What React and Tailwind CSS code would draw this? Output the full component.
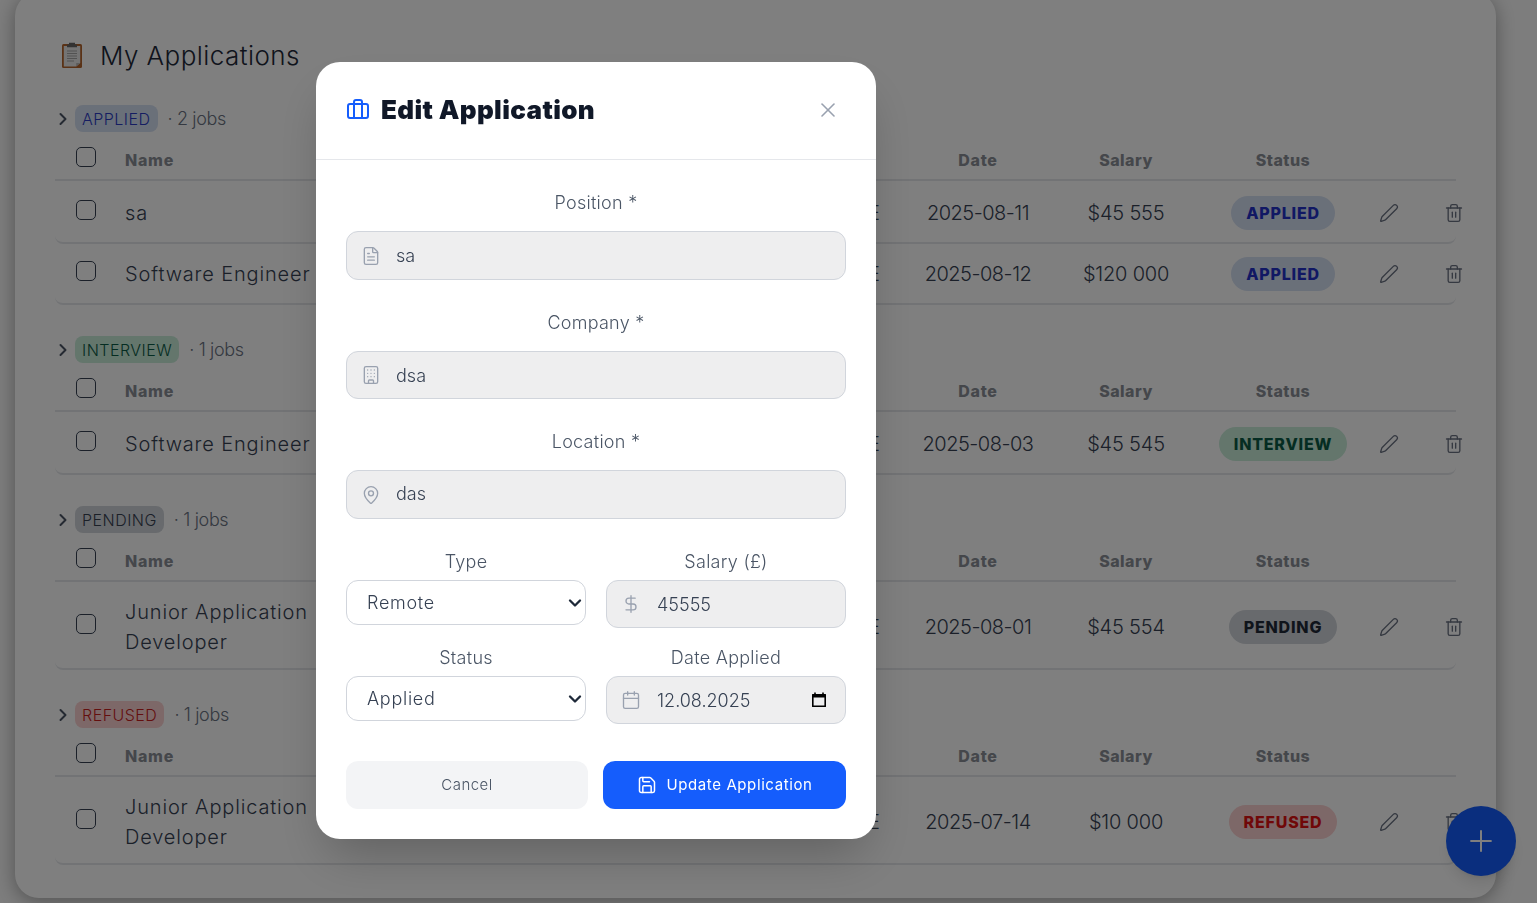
import { Briefcase, Building, Calendar, ChevronDown, ChevronRight, DollarSign, FileText, MapPin, Pen, Plus, Save, Trash2, X } from "lucide-react";

const GROUPS = [
    {
        label: "APPLIED",
        count: 2,
        chip: "bg-[#d5e0f2] text-[#2a3bc4]",
        pill: "bg-[#d5e0f2] text-[#2231c8]",
        rows: [
            { name: "sa", date: "2025-08-11", salary: "$45 555", height: "h-[63px] pt-[3px]" },
            { name: "Software Engineer", date: "2025-08-12", salary: "$120 000", height: "h-[61px] pt-[1px]" },
        ],
    },
    {
        label: "INTERVIEW",
        count: 1,
        chip: "bg-[#c8ecd9] text-[#0b5b45]",
        pill: "bg-[#c8ecd9] text-[#0b5b45]",
        rows: [{ name: "Software Engineer", date: "2025-08-03", salary: "$45 545", height: "h-[63px] pt-[3px]" }],
    },
    {
        label: "PENDING",
        count: 1,
        chip: "bg-[#d1d5db] text-[#374151]",
        pill: "bg-[#d1d5db] text-[#1f2937]",
        rows: [{ name: "Junior Application Developer", date: "2025-08-01", salary: "$45 554", height: "h-[88px] pt-[3px]" }],
    },
    {
        label: "REFUSED",
        count: 1,
        chip: "bg-[#fbd0d0] text-[#c81e1e]",
        pill: "bg-[#fbd0d0] text-[#e01010]",
        rows: [{ name: "Junior Application Developer", date: "2025-07-14", salary: "$10 000", height: "h-[88px] pt-[3px]" }],
    },
];

const ROW_GRID = "grid grid-cols-[70px_195px_565px_20px_146px_150px_164px_48px_82px] items-center";

function Checkbox() {
    return <input type="checkbox" className="appearance-none block w-5 h-5 -mt-[6px] ml-[21px] rounded-[5px] border border-gray-700 bg-transparent" />;
}

function ClipboardEmoji() {
    return (
        <svg viewBox="0 0 22 26" className="w-[22px] h-[26px]" aria-hidden="true">
            <rect x="1" y="2" width="20" height="24" rx="1.5" fill="#b5652c" />
            <path d="M2.8 4h16.4v17l-4 3.4H2.8z" fill="#e8e8e8" />
            <path d="M15.2 24.4l4-3.4h-4z" fill="#b9b9b9" />
            <path d="M8 0.8h6v1.6h2v2.8H6V2.4h2z" fill="#666" />
            <path d="M6 9h10M6 11.5h10M6 14h10M6 16.5h10M6 19h7" stroke="#a5a5a5" strokeWidth="1" />
        </svg>
    );
}

function JobRow({ row, group }) {
    return (
        <div className={`${ROW_GRID} ${row.height} w-[1401px] border-b-2 border-gray-200 rounded-b-lg`}>
            <Checkbox />
            <span className="text-[20px] leading-[30px] tracking-[0.042em] font-light text-gray-700">{row.name}</span>
            <span />
            <span className="text-[20px] font-light text-gray-700 -ml-[100px] w-[96px] text-right tracking-[0.05em]">REMOTE</span>
            <span className="text-center text-[20px] font-light text-gray-700 tracking-[-0.025em] whitespace-nowrap">{row.date}</span>
            <span className="text-center text-[20px] font-light text-gray-700 tracking-[-0.01em]">{row.salary}</span>
            <span className="flex justify-center">
                <span className={`h-[34px] px-[15px] rounded-full flex items-center text-[16px] font-extrabold tracking-[0.05em] ${group.pill}`}>
                    {group.label}
                </span>
            </span>
            <span className="flex justify-center text-gray-500">
                <Pen size={20} strokeWidth={1.6} />
            </span>
            <span className="flex justify-center text-gray-500">
                <Trash2 size={20} strokeWidth={1.6} />
            </span>
        </div>
    );
}

function JobGroup({ group }) {
    return (
        <section className="mb-[31px]">
            <div className="flex items-center h-[27px]">
                <ChevronRight size={20} strokeWidth={2.4} className="-ml-[2px] text-gray-600" />
                <span className={`ml-[2px] h-[27px] px-[7px] rounded-lg flex items-center text-[16px] font-light tracking-[0.03em] ${group.chip}`}>
                    {group.label}
                </span>
                <span className="ml-[10px] text-[18px] font-light text-gray-500 tracking-[-0.02em]">· {group.count} jobs</span>
            </div>
            <div className={`${ROW_GRID} h-[49px] pt-[8px] w-[1401px] border-b-2 border-gray-200`}>
                <Checkbox />
                <span className="text-[16px] font-extrabold tracking-[0.045em] text-[#8b8f97]">Name</span>
                <span />
                <span />
                <span className="text-center text-[16px] font-extrabold tracking-[0.045em] text-[#8b8f97]">Date</span>
                <span className="text-center text-[16px] font-extrabold tracking-[0.03em] text-[#8b8f97]">Salary</span>
                <span className="text-center text-[16px] font-extrabold tracking-[0.03em] text-[#8b8f97]">Status</span>
            </div>
            {group.rows.map((row) => (
                <JobRow key={row.date} row={row} group={group} />
            ))}
        </section>
    );
}

function Label({ children }) {
    return <label className="block text-center text-[18px] font-light text-gray-600 tracking-[0.015em]">{children}</label>;
}

function IconInput({ icon: Icon, value, size = "h-[49px] pl-[49px] pb-[1px]", right }) {
    return (
        <div className="relative">
            <Icon size={20} strokeWidth={1.6} className="absolute left-[15px] top-1/2 -translate-y-1/2 text-gray-400" />
            <input
                readOnly
                value={value}
                className={`w-full ${size} pr-4 rounded-xl border border-gray-300 bg-[#eeeeef] text-[18px] font-light text-gray-700 outline-none`}
            />
            {right}
        </div>
    );
}

function NativeSelect({ value, options }) {
    return (
        <div className="relative">
            <select
                value={value}
                onChange={() => {}}
                className="appearance-none w-full h-[45px] pl-[20px] pr-6 rounded-xl border border-gray-300 bg-white text-[18px] font-light tracking-[0.04em] text-gray-700 outline-none"
            >
                {options.map((option) => (
                    <option key={option}>{option}</option>
                ))}
            </select>
            <ChevronDown size={20} strokeWidth={2.8} className="absolute right-px top-1/2 -translate-y-1/2 text-gray-800 pointer-events-none" />
        </div>
    );
}

function PickerIcon() {
    return (
        <svg viewBox="0 0 16 16" className="absolute right-[19px] top-1/2 -translate-y-1/2 w-[16px] h-[16px]" aria-hidden="true">
            <path d="M4 0.5v2M12 0.5v2" stroke="#000" strokeWidth="1.6" />
            <path d="M1.5 2h13a.5.5 0 0 1 .5.5v12a.5.5 0 0 1-.5.5h-13a.5.5 0 0 1-.5-.5v-12a.5.5 0 0 1 .5-.5zM2.6 5.6v7.8h10.8V5.6z" fill="#000" fillRule="evenodd" />
        </svg>
    );
}

function EditModal() {
    return (
        <div className="fixed left-[316px] top-[62px] w-[560px] h-[777px] bg-white rounded-3xl shadow-2xl">
            <div className="h-[98px] pb-[2px] px-[30px] flex items-center border-b border-gray-200">
                <Briefcase size={24} strokeWidth={2} className="text-blue-600" />
                <h2 className="ml-[11px] text-[26px] font-black text-gray-900 tracking-[0.014em]">Edit Application</h2>
                <X size={24} strokeWidth={1.6} className="ml-auto mr-[6px] text-gray-400" />
            </div>
            <form className="px-[30px] pt-[29px]">
                <Label>Position *</Label>
                <div className="mt-[15px]">
                    <IconInput icon={FileText} value="sa" />
                </div>
                <div className="mt-[29px]">
                    <Label>Company *</Label>
                </div>
                <div className="mt-[15px]">
                    <IconInput icon={Building} value="dsa" size="h-[48px] pl-[49px]" />
                </div>
                <div className="mt-[29px]">
                    <Label>Location *</Label>
                </div>
                <div className="mt-[15px]">
                    <IconInput icon={MapPin} value="das" size="h-[49px] pl-[49px] pb-[2px]" />
                </div>
                <div className="mt-[29px] grid grid-cols-2 gap-x-5">
                    <div>
                        <Label>Type</Label>
                        <div className="mt-[5px]">
                            <NativeSelect value="Remote" options={["Remote", "Hybrid", "On-site"]} />
                        </div>
                    </div>
                    <div>
                        <Label>Salary (£)</Label>
                        <div className="mt-[5px]">
                            <IconInput icon={DollarSign} value="45555" size="h-[48px] pl-[50px]" />
                        </div>
                    </div>
                </div>
                <div className="mt-[16px] grid grid-cols-2 gap-x-5">
                    <div>
                        <Label>Status</Label>
                        <div className="mt-[5px]">
                            <NativeSelect value="Applied" options={["Applied", "Interview", "Pending", "Refused"]} />
                        </div>
                    </div>
                    <div>
                        <Label>Date Applied</Label>
                        <div className="mt-[5px]">
                            <IconInput icon={Calendar} value="12.08.2025" size="h-[48px] pl-[50px]" right={<PickerIcon />} />
                        </div>
                    </div>
                </div>
                <div className="mt-[37px] flex gap-[15px]">
                    <button type="button" className="w-[242px] h-[48px] rounded-xl bg-gray-100 text-[15px] font-light text-gray-600 tracking-[0.03em]">
                        Cancel
                    </button>
                    <button type="button" className="w-[243px] h-[48px] rounded-xl bg-blue-600 text-white text-[15px] tracking-[0.04em] flex items-center justify-center gap-[10px]">
                        <Save size={20} strokeWidth={1.8} />
                        Update Application
                    </button>
                </div>
            </form>
        </div>
    );
}

export default function App() {
    return (
        <div className="relative h-screen overflow-hidden bg-[#fbfbfb] px-[15px] [font-family:Inter,sans-serif]">
            <div className="-mt-[8px] w-[1481px] h-[906px] bg-white rounded-3xl shadow-[0_4px_20px_rgba(0,0,0,0.35)] pl-[40px] pt-[50px]">
                <div className="flex items-center h-[26px] ml-[6px]">
                    <ClipboardEmoji />
                    <h1 className="ml-[17px] text-[26px] font-light text-gray-800 tracking-[0.017em]">My Applications</h1>
                </div>
                <div className="mt-[37px]">
                    {GROUPS.map((group) => (
                        <JobGroup key={group.label} group={group} />
                    ))}
                </div>
            </div>
            <button type="button" className="fixed left-[1446px] top-[806px] w-[70px] h-[70px] rounded-full bg-blue-600 text-white flex items-center justify-center shadow-lg">
                <Plus size={34} strokeWidth={1.4} />
            </button>
            <div className="fixed inset-0 bg-black/50" />
            <EditModal />
        </div>
    );
}
